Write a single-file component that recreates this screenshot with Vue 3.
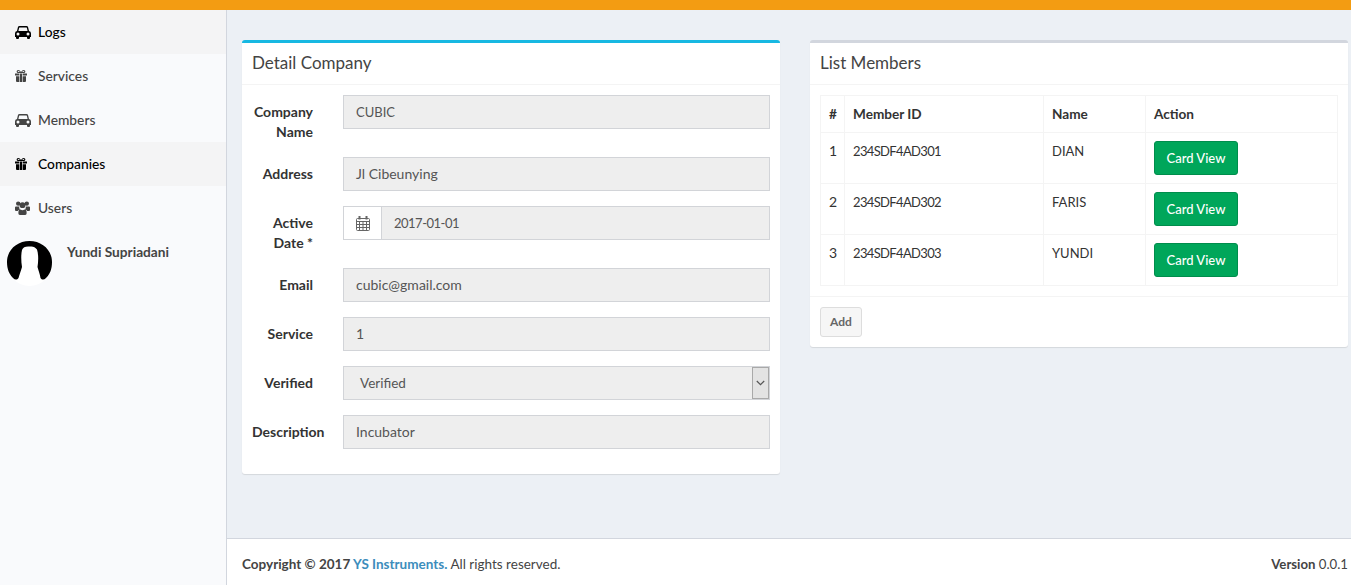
<script setup>
const nav = [
  { label: 'Logs', icon: 'car', active: true },
  { label: 'Services', icon: 'gift' },
  { label: 'Members', icon: 'car' },
  { label: 'Companies', icon: 'gift', active: true },
  { label: 'Users', icon: 'users' },
]
const members = [
  { n: 1, id: '234SDF4AD301', name: 'DIAN' },
  { n: 2, id: '234SDF4AD302', name: 'FARIS' },
  { n: 3, id: '234SDF4AD303', name: 'YUNDI' },
]
</script>

<template>
  <div class="page">
    <div class="topbar"></div>
    <div class="shell">
      <aside class="sidebar">
        <a v-for="item in nav" :key="item.label" class="nav-item" :class="{ active: item.active }">
          <span class="nav-icon">
            <svg v-if="item.icon === 'car'" width="16" height="13" viewBox="0 0 16 13" fill="currentColor" fill-rule="evenodd">
              <path d="M2.9 1.2Q3.2 0 4.5 0H11.5Q12.8 0 13.1 1.2L14 5Q16 5.4 16 7.6V11H15V12Q15 13 14 13H13Q12 13 12 12V11H4V12Q4 13 3 13H2Q1 13 1 12V11H0V7.6Q0 5.4 2 5ZM4.4 1.6Q4.2 1.6 4.1 1.9L3.4 5H12.6L11.9 1.9Q11.8 1.6 11.6 1.6ZM3 6.5A1.5 1.5 0 1 0 3 9.5A1.5 1.5 0 1 0 3 6.5ZM13 6.5A1.5 1.5 0 1 0 13 9.5A1.5 1.5 0 1 0 13 6.5Z"/>
            </svg>
            <svg v-else-if="item.icon === 'gift'" width="12" height="12" viewBox="0 0 12 12" fill="currentColor" fill-rule="evenodd">
              <path d="M0 3.4H4.4V5.6H0ZM7.6 3.4H12V5.6H7.6ZM1 6.2H4.4V12H2Q1 12 1 11ZM7.6 6.2H11V11Q11 12 10 12H7.6ZM5 3.4H7V12H5Z"/>
              <path d="M3.2 0Q4.9 0 6 2Q7.1 0 8.8 0Q10.4 0 10.4 1.5Q10.4 3 8.8 3H3.2Q1.6 3 1.6 1.5Q1.6 0 3.2 0ZM3.2 1.1Q2.7 1.1 2.7 1.5Q2.7 1.9 3.2 1.9H5Q4 1.1 3.2 1.1ZM8.8 1.1Q8 1.1 7 1.9H8.8Q9.3 1.9 9.3 1.5Q9.3 1.1 8.8 1.1Z"/>
            </svg>
            <svg v-else width="15" height="14" viewBox="0 0 15 14" fill="currentColor">
              <circle cx="3.2" cy="2.6" r="2.2"/>
              <circle cx="11.8" cy="2.6" r="2.2"/>
              <circle cx="7.5" cy="4.2" r="2.9"/>
              <path d="M0 6.4Q0 5.4 1 5.4H4.2Q3.9 7.2 5 8.4Q3.2 8.8 2.8 10H1Q0 10 0 9ZM15 6.4Q15 5.4 14 5.4H10.8Q11.1 7.2 10 8.4Q11.8 8.8 12.2 10H14Q15 10 15 9ZM3.4 10.8Q3.4 8.4 5.6 8.4Q6.4 9.2 7.5 9.2Q8.6 9.2 9.4 8.4Q11.6 8.4 11.6 10.8V12.6Q11.6 14 10.2 14H4.8Q3.4 14 3.4 12.6Z"/>
            </svg>
          </span>
          <span>{{ item.label }}</span>
        </a>
        <div class="user">
          <svg class="avatar" width="45" height="45" viewBox="0 0 45 45">
            <circle cx="22.5" cy="22.5" r="22.5" fill="#fff"/>
            <path d="M22.5 0C35 0 45 9 45 21C45 28 43 33 39 37C37 39 35 39 33.5 37C33 33 31.5 30 30.5 26C31.5 20 31.5 13 30 8.5C28 6 26 5 23 5.5C19 5 16 6 15 9C14 13 14 20 15 26C14 30 12.5 33 11.5 37C10 39 8 39 6 37C2 33 0 28 0 21C0 9 10 0 22.5 0Z" fill="#000"/>
          </svg>
          <span class="user-name">Yundi Supriadani</span>
        </div>
      </aside>

      <div class="main">
        <section class="content">
          <div class="box box-info">
            <h3 class="box-title">Detail Company</h3>
            <div class="form">
              <div class="form-row">
                <label>Company Name</label>
                <div class="control field caps">CUBIC</div>
              </div>
              <div class="form-row">
                <label>Address</label>
                <div class="control field">Jl Cibeunying</div>
              </div>
              <div class="form-row">
                <label>Active Date *</label>
                <div class="control group">
                  <span class="addon">
                    <svg width="14" height="15" viewBox="0 0 14 15" fill="none" stroke="#666" stroke-width="1">
                      <rect x="0.5" y="2.5" width="13" height="12" rx="1"/>
                      <path d="M0.5 5.5H13.5M0.5 8.5H13.5M0.5 11.5H13.5M3.5 5.5V14.5M7 5.5V14.5M10.5 5.5V14.5"/>
                      <path d="M3.5 0V3.5M10.5 0V3.5" stroke-width="2"/>
                    </svg>
                  </span>
                  <div class="field grow date">2017-01-01</div>
                </div>
              </div>
              <div class="form-row">
                <label>Email</label>
                <div class="control field">cubic@gmail.com</div>
              </div>
              <div class="form-row">
                <label>Service</label>
                <div class="control field">1</div>
              </div>
              <div class="form-row">
                <label>Verified</label>
                <div class="control field select">
                  <span>Verified</span>
                  <span class="arrow">
                    <svg width="9" height="6" viewBox="0 0 9 6" fill="none" stroke="#555" stroke-width="1.2">
                      <path d="M0.8 1L4.5 4.7L8.2 1"/>
                    </svg>
                  </span>
                </div>
              </div>
              <div class="form-row">
                <label>Description</label>
                <div class="control field">Incubator</div>
              </div>
            </div>
          </div>

          <div class="box box-plain">
            <h3 class="box-title">List Members</h3>
            <div class="table-wrap">
              <table>
                <colgroup>
                  <col class="c1" /><col class="c2" /><col class="c3" /><col />
                </colgroup>
                <thead>
                  <tr><th>#</th><th>Member ID</th><th>Name</th><th>Action</th></tr>
                </thead>
                <tbody>
                  <tr v-for="m in members" :key="m.n">
                    <td>{{ m.n }}</td>
                    <td class="member-id">{{ m.id }}</td>
                    <td class="member-name">{{ m.name }}</td>
                    <td><button class="btn-card">Card View</button></td>
                  </tr>
                </tbody>
              </table>
            </div>
            <div class="box-footer">
              <button class="btn-add">Add</button>
            </div>
          </div>
        </section>

        <footer class="footer">
          <div><strong>Copyright © 2017 <a class="link">YS Instruments.</a></strong> All rights reserved.</div>
          <div class="version"><strong>Version</strong> 0.0.1</div>
        </footer>
      </div>
    </div>
  </div>
</template>

<style>
html, body { margin: 0; padding: 0; }
</style>

<style scoped>
.page {
  height: 585px;
  display: flex;
  flex-direction: column;
  overflow: hidden;
  font-family: "Lato", "Noto Sans", "Liberation Sans", sans-serif;
  font-size: 14px;
  line-height: 20px;
  color: #333;
}
.topbar { height: 10px; background: #f39c12; flex: none; }
.shell { flex: 1; display: flex; min-height: 0; }
.sidebar {
  width: 226px;
  flex: none;
  background: #f9fafc;
  border-right: 1px solid #d2d6de;
}
.nav-item {
  height: 44px;
  display: flex;
  align-items: center;
  padding-left: 15px;
  color: #444;
  font-size: 13.8px;
  font-weight: 500;
}
.nav-item.active { background: #f4f4f5; color: #000; }
.nav-icon { width: 23px; flex: none; display: flex; align-items: center; }
.user { display: flex; padding: 11px 0 0 7px; align-items: flex-start; }
.avatar { flex: none; }
.user-name { margin: 1px 0 0 15px; font-size: 13.7px; color: #444; font-weight: 700; }
.main { flex: 1; min-width: 0; display: flex; flex-direction: column; background: #ecf0f5; }
.content { flex: 1; display: flex; gap: 30px; align-items: flex-start; padding: 30px 3px 0 15px; }
.box {
  flex: 1;
  min-width: 0;
  background: #fff;
  border-top: 3px solid #d2d6de;
  border-radius: 3px;
  box-shadow: 0 1px 1px rgba(0, 0, 0, 0.1);
}
.box-info { border-top-color: #17b8e2; }
.box-title {
  margin: 0;
  padding: 10px 10px 0;
  height: 42px;
  box-sizing: border-box;
  font-size: 17px;
  line-height: 20px;
  font-weight: 400;
  color: #444;
  border-bottom: 1px solid #f4f4f4;
}
.form { padding: 10px; }
.form-row { display: flex; gap: 30px; margin-bottom: 15px; }
.form-row label {
  width: 61px;
  flex: none;
  padding-top: 7px;
  text-align: right;
  font-weight: 700;
  color: #333;
}
.control { flex: 1; min-width: 0; }
.field {
  height: 34px;
  box-sizing: border-box;
  padding: 6px 12px;
  background: #eee;
  border: 1px solid #d2d4d8;
  color: #555;
}
.caps { font-size: 13px; }
.date { font-size: 13px; letter-spacing: -0.5px; }
.group { display: flex; }
.addon {
  width: 38px;
  height: 34px;
  box-sizing: border-box;
  flex: none;
  display: flex;
  align-items: center;
  justify-content: center;
  background: #fff;
  border: 1px solid #d2d4d8;
  border-right: 0;
}
.grow { flex: 1; }
.select { display: flex; justify-content: space-between; padding: 6px 0 6px 16px; position: relative; font-size: 13.5px; }
.arrow {
  position: absolute;
  top: 0;
  right: 0;
  bottom: 0;
  width: 17px;
  box-sizing: border-box;
  display: flex;
  align-items: center;
  justify-content: center;
  background: #e3e3e3;
  border: 1px solid #a9a9a9;
}
.table-wrap { padding: 10px; border-bottom: 1px solid #f4f4f4; }
table { width: 100%; border-collapse: collapse; table-layout: fixed; border: 1px solid #f4f4f4; }
.c1 { width: 24px; }
.c2 { width: 199px; }
.c3 { width: 102px; }
th, td { padding: 8px; border: 1px solid #f4f4f4; text-align: left; vertical-align: top; }
th { font-weight: 700; font-size: 13.6px; }
tr > :first-child { padding-right: 0; }
.member-id { font-size: 13px; letter-spacing: -0.65px; }
.member-name { font-size: 13px; }
.btn-card {
  display: block;
  width: 84px;
  height: 34px;
  padding: 0;
  font: inherit;
  font-size: 13px;
  font-weight: 500;
  color: #fff;
  background: #00a65a;
  border: 1px solid #008d4c;
  border-radius: 3px;
}
.box-footer { padding: 10px; }
.btn-add {
  display: block;
  width: 42px;
  height: 30px;
  padding: 0;
  font: inherit;
  font-size: 12px;
  font-weight: 700;
  color: #666;
  background: #f6f6f6;
  border: 1px solid #ddd;
  border-radius: 3px;
}
.footer {
  height: 47px;
  box-sizing: border-box;
  flex: none;
  display: flex;
  justify-content: space-between;
  padding: 15px 3px 0 15px;
  background: #fff;
  border-top: 1px solid #d2d6de;
  font-size: 13.5px;
  color: #444;
}
.version { font-size: 13.2px; }
.link { color: #3c8dbc; }
</style>
